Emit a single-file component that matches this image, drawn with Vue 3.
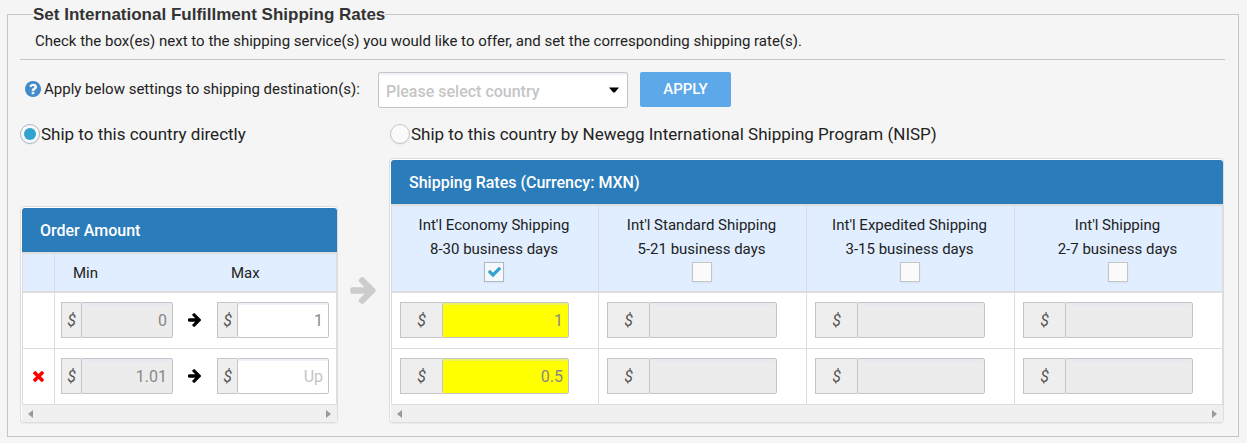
<script setup>
import { ref } from 'vue'

const country = ref('')
const method = ref('direct')

const amounts = ref([
  { min: '0', max: '1', removable: false },
  { min: '1.01', max: '', removable: true },
])

const services = ref([
  { id: 'economy', name: "Int'l Economy Shipping", days: '8-30 business days', on: true, rates: ['1', '0.5'] },
  { id: 'standard', name: "Int'l Standard Shipping", days: '5-21 business days', on: false, rates: ['', ''] },
  { id: 'expedited', name: "Int'l Expedited Shipping", days: '3-15 business days', on: false, rates: ['', ''] },
  { id: 'express', name: "Int'l Shipping", days: '2-7 business days', on: false, rates: ['', ''] },
])

const arrowPath =
  'M1600 960q0 54-37 91l-651 651q-39 37-91 37-51 0-90-37l-75-75q-38-38-38-91t38-91l293-293h-704q-52 0-84.500-37.500t-32.500-90.500v-128q0-53 32.500-90.500t84.500-37.500h704l-293-294q-38-36-38-90t38-90l75-75q38-38 90-38 53 0 91 38l651 651q37 35 37 90z'
</script>

<template>
  <fieldset class="rates">
    <legend>Set International Fulfillment Shipping Rates</legend>
    <p class="intro">
      Check the box(es) next to the shipping service(s) you would like to offer, and set the corresponding shipping rate(s).
    </p>

    <div class="destination">
      <label class="destination-label" for="country">
        <svg class="help" viewBox="128 128 1536 1536" aria-hidden="true">
          <path d="M1024 1376v-192q0-14-9-23t-23-9h-192q-14 0-23 9t-9 23v192q0 14 9 23t23 9h192q14 0 23-9t9-23zm256-672q0-88-55.500-163t-138.500-116-170-41q-243 0-371 213-15 24 8 42l132 100q7 6 19 6 16 0 25-12 53-68 86-92 34-24 86-24 48 0 85.500 26t37.500 59q0 38-20 61t-68 45q-63 28-115.500 86.500t-52.500 125.500v36q0 14 9 23t23 9h192q14 0 23-9t9-23q0-19 21.500-49.500t54.500-49.500q32-18 49-28.500t46-35 44.500-48 28-60.500 12.500-81zm384 192q0 209-103 385.500t-279.500 279.500-385.500 103-385.500-103-279.500-279.500-103-385.500 103-385.500 279.500-279.500 385.500-103 385.500 103 279.500 279.500 103 385.500z" />
        </svg>
        Apply below settings to shipping destination(s):
      </label>
      <span class="picker">
        <select id="country" v-model="country">
          <option value="">Please select country</option>
        </select>
        <svg class="caret" viewBox="0 0 10 6" aria-hidden="true"><path d="M0 0.500h10L6 5.200q-1 0.800-2 0z" /></svg>
      </span>
      <button class="apply" type="button">APPLY</button>
    </div>

    <div class="board">
      <label class="method">
        <input v-model="method" type="radio" name="method" value="direct" />Ship to this country directly
      </label>
      <label class="method nisp">
        <input v-model="method" type="radio" name="method" value="nisp" />Ship to this country by Newegg International Shipping Program (NISP)
      </label>

      <section class="panel orders">
        <h2>Order Amount</h2>
        <table>
          <colgroup><col class="c-del" /><col class="c-amount" /><col class="c-arrow" /><col class="c-amount" /></colgroup>
          <thead>
            <tr><th class="ruled"></th><th>Min</th><th></th><th>Max</th></tr>
          </thead>
          <tbody>
            <tr v-for="(row, i) in amounts" :key="i">
              <td class="ruled">
                <button v-if="row.removable" class="remove" type="button" aria-label="Remove">
                  <svg viewBox="302 302 1188 1188" aria-hidden="true">
                    <path transform="translate(0 -64)" d="M1490 1322q0 40-28 68l-136 136q-28 28-68 28t-68-28l-294-294-294 294q-28 28-68 28t-68-28l-136-136q-28-28-28-68t28-68l294-294-294-294q-28-28-28-68t28-68l136-136q28-28 68-28t68 28l294 294 294-294q28-28 68-28t68 28l136 136q28 28 28 68t-28 68l-294 294 294 294q28 28 28 68z" />
                  </svg>
                </button>
              </td>
              <td class="amount">
                <div class="money">
                  <label :for="'min' + i">$</label>
                  <input :id="'min' + i" v-model="row.min" type="text" disabled />
                </div>
              </td>
              <td class="between">
                <svg viewBox="128 181 1472 1558" aria-hidden="true"><path :d="arrowPath" /></svg>
              </td>
              <td class="amount max">
                <div class="money">
                  <label :for="'max' + i">$</label>
                  <input :id="'max' + i" v-model="row.max" type="text" placeholder="Up" />
                </div>
              </td>
            </tr>
          </tbody>
        </table>
        <div class="scroller" aria-hidden="true"><i class="left"></i><i class="right"></i></div>
      </section>

      <svg class="big-arrow" viewBox="128 181 1472 1558" aria-hidden="true"><path :d="arrowPath" /></svg>

      <section class="panel shipping">
        <h2>Shipping Rates (Currency: MXN)</h2>
        <table>
          <colgroup><col class="c-first" /><col span="3" /></colgroup>
          <thead>
            <tr>
              <th v-for="s in services" :key="s.id">
                <label :for="s.id">{{ s.name }}<br />{{ s.days }}</label>
                <span class="tick">
                  <input :id="s.id" v-model="s.on" type="checkbox" />
                  <svg v-if="s.on" viewBox="121 344 1550 1178" aria-hidden="true">
                    <path d="M1671 566q0 40-28 68l-724 724-136 136q-28 28-68 28t-68-28l-136-136-362-362q-28-28-28-68t28-68l136-136q28-28 68-28t68 28l294 295 656-657q28-28 68-28t68 28l136 136q28 28 28 68z" />
                  </svg>
                </span>
              </th>
            </tr>
          </thead>
          <tbody>
            <tr v-for="r in 2" :key="r">
              <td v-for="s in services" :key="s.id">
                <div class="money wide">
                  <label :for="s.id + r">$</label>
                  <input :id="s.id + r" v-model="s.rates[r - 1]" :class="{ active: s.on }" type="text" :disabled="!s.on" />
                </div>
              </td>
            </tr>
          </tbody>
        </table>
        <div class="scroller" aria-hidden="true"><i class="left"></i><i class="right"></i></div>
      </section>
    </div>
  </fieldset>
</template>

<style>
html,
body {
  background: #f5f5f5;
}
</style>

<style scoped>
.rates,
.rates * {
  box-sizing: border-box;
}
.rates {
  margin: 0 8px 0 7px;
  padding: 0 13px 13px 12px;
  border: 1px solid #c5c5c5;
  min-width: 0;
  font: 15px/24px Roboto, sans-serif;
  color: #222;
}
legend {
  margin-left: 13px;
  padding: 0;
  font: bold 17px/29px "Liberation Sans", Arial, sans-serif;
  color: #333;
}
.intro {
  margin: 0;
  padding: 0 15px 6px;
  border-bottom: 1px solid #c5c5c5;
}
.destination {
  display: flex;
  align-items: flex-start;
  margin: 12px 0 16px;
}
.destination-label {
  display: flex;
  align-items: center;
  gap: 3px;
  width: 358px;
  height: 36px;
  padding: 0 0 2px 5px;
}
.help {
  width: 16px;
  height: 16px;
  fill: #428bca;
}
.picker {
  display: grid;
  width: 250px;
  align-items: center;
}
.picker > * {
  grid-area: 1 / 1;
}
select {
  appearance: none;
  width: 100%;
  height: 36px;
  padding: 3px 24px 0 7px;
  border: 1px solid #c5c5c5;
  border-radius: 2px;
  background: #fff;
  box-shadow: inset 0 2px 1px #eef0fb;
  font: 500 16px/20px Roboto, sans-serif;
  color: #c5c5c5;
}
.caret {
  justify-self: end;
  width: 10px;
  height: 6px;
  margin-right: 9px;
  pointer-events: none;
}
.apply {
  width: 91px;
  height: 35px;
  margin-left: 12px;
  padding: 0;
  border: 0;
  border-radius: 2px;
  background: #5da8e8;
  font: 500 15px/35px Roboto, sans-serif;
  color: #fff;
}
.board {
  display: grid;
  grid-template-columns: 318px 51px minmax(0, 1fr);
  margin-right: 1px;
  row-gap: 14px;
  align-items: end;
}
.method {
  display: flex;
  align-items: center;
  gap: 1px;
  height: 20px;
  font-size: 17px;
  white-space: nowrap;
}
.nisp {
  grid-column: 3;
  padding-left: 1px;
}
.method input {
  appearance: none;
  display: grid;
  place-items: center;
  width: 20px;
  height: 20px;
  margin: 0;
  border: 1px solid #c5c5c5;
  border-radius: 50%;
  background: #fafafa;
  box-shadow: 0 1px 2px #0000000d;
}
.method input:checked {
  border-color: #adb8c0;
  background: #f5f8fc;
}
.method input:checked::before {
  content: "";
  width: 12px;
  height: 12px;
  border-radius: 50%;
  background: #32a3ce;
}
.panel {
  min-width: 0;
  border: 1px solid #ddd;
  border-radius: 4px;
  padding: 1px 0 0 1px;
  background: #fff;
  box-shadow: 0 1px 1px #0000000d;
}
h2 {
  margin: 0;
  padding: 1px 18px 0;
  border-radius: 3px 3px 0 0;
  background: #2b7cbb;
  font: 500 16px/43px Roboto, sans-serif;
  color: #fff;
}
table {
  width: 100%;
  table-layout: fixed;
  border-collapse: separate;
  border-spacing: 0;
  border: solid #ddd;
  border-width: 2px 0 0 1px;
}
th {
  padding: 7px 0 6px;
  border-bottom: 2px solid #ddd;
  background: #e0eeff;
  font-weight: 400;
}
td {
  padding: 9px 0 10px;
  border-bottom: 1px solid #ddd;
}
.ruled,
.shipping th,
.shipping td,
.orders th:last-child,
.orders td:last-child {
  border-right: 1px solid #ddd;
}
.c-del {
  width: 32px;
}
.c-arrow {
  width: 34px;
}
.c-first {
  width: 207px;
}
.orders th {
  padding-left: 18px;
  text-align: left;
}
.orders th.ruled {
  padding-left: 0;
}
.amount {
  padding-left: 6px;
  padding-right: 6px;
}
.orders .amount.max {
  padding-left: 4px;
  padding-right: 7px;
}
.between {
  padding-right: 3px;
}
.between svg {
  display: block;
  width: 13px;
  height: 14px;
  margin: 0 auto;
}
.remove {
  display: block;
  margin: 0 auto;
  padding: 0;
  border: 0;
  background: none;
}
.remove svg {
  display: block;
  width: 11px;
  height: 11px;
  fill: #f00;
}
.money {
  display: flex;
  height: 36px;
}
.money label {
  flex: 0 0 20px;
  border: 1px solid #c5c5c5;
  border-right: 0;
  background: #eee;
  font-style: italic;
  font-size: 16px;
  line-height: 36px;
  text-align: center;
  color: #555;
}
.money.wide label {
  flex-basis: 42px;
}
.money input {
  flex: 1;
  min-width: 0;
  padding: 2px 5px 0 4px;
  border: 1px solid #c5c5c5;
  border-radius: 2px;
  background: #fff;
  box-shadow: inset 0 2px 1px #eef0fb;
  font: 16px/20px Roboto, sans-serif;
  text-align: right;
  color: #888;
}
.money input:disabled {
  background: #ececec;
  box-shadow: inset 0 2px 1px #e6e8f4;
}
.money input.active {
  background: #ff0;
  box-shadow: inset 0 2px 1px #eef060;
}
.money input::placeholder {
  color: #c5c5c5;
}
.shipping th {
  padding-right: 2px;
  padding-bottom: 9px;
}
.shipping td {
  padding-left: 8px;
  padding-right: 29px;
}
.tick {
  display: grid;
  place-items: center;
  margin-top: 1px;
}
.tick > * {
  grid-area: 1 / 1;
}
.tick input {
  appearance: none;
  width: 20px;
  height: 20px;
  margin: 0;
  border: 1px solid #c5c5c5;
  background: #fafafa;
  box-shadow: 0 1px 2px #0000000d;
}
.tick input:checked {
  border-color: #adb8c0;
  background: #f5f8fc;
}
.tick svg {
  width: 13px;
  height: 10px;
  fill: #32a3ce;
  pointer-events: none;
}
.scroller {
  display: flex;
  justify-content: space-between;
  align-items: center;
  height: 17px;
  padding: 0 6px;
  background: #f0f0f0;
}
.scroller i {
  border: solid transparent;
  border-width: 4px 0;
}
.scroller .left {
  border-right: 5px solid #999;
}
.scroller .right {
  border-left: 5px solid #999;
}
.big-arrow {
  width: 26px;
  height: 27px;
  margin: 0 0 119px 12px;
  fill: #ccc;
}
</style>
